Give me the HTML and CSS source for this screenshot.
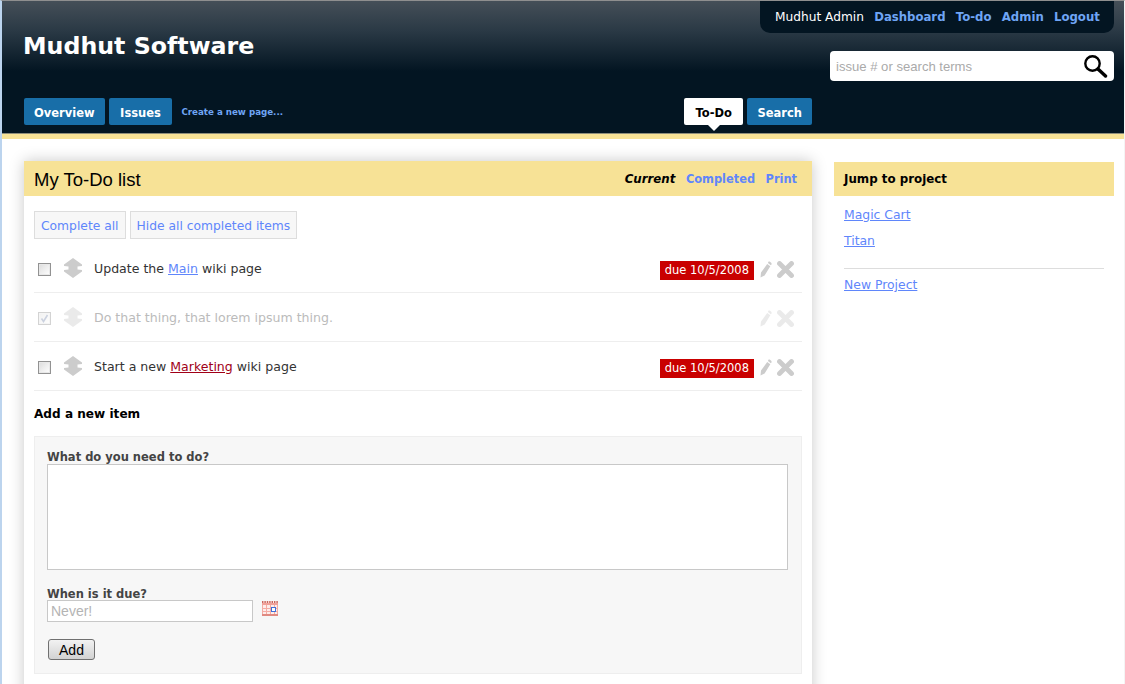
FILE: index.html
```html
<!DOCTYPE html>
<html lang="en">
<head>
<meta charset="utf-8">
<title>Mudhut Software</title>
<link rel="stylesheet" href="styles.css">
</head>
<body>
<div class="frame">
  <header class="header">
    <div class="head-top">
      <h1 class="brand">Mudhut Software</h1>
      <div class="head-right">
        <nav class="account">
          <span class="user">Mudhut Admin</span>
          <a href="#">Dashboard</a>
          <a href="#">To-do</a>
          <a href="#">Admin</a>
          <a href="#">Logout</a>
        </nav>
        <div class="search">
          <span class="search-text">issue # or search terms</span>
          <svg class="search-icon" width="26" height="24" viewBox="0 0 26 24"><circle cx="9.5" cy="9.5" r="7.2" fill="none" stroke="#000" stroke-width="2.4"/><path d="M15 15 L22.5 22" stroke="#000" stroke-width="3.4" stroke-linecap="round"/></svg>
        </div>
      </div>
    </div>
    <div class="tabs">
      <div class="tabs-left">
        <a class="tab" href="#">Overview</a>
        <a class="tab tab-wide" href="#">Issues</a>
        <a class="new-page" href="#">Create a new page...</a>
      </div>
      <div class="tabs-right">
        <a class="tab tab-wide tab-active" href="#">To-Do</a>
        <a class="tab" href="#">Search</a>
      </div>
    </div>
  </header>
  <div class="stripe"></div>
  <div class="content">
    <main class="panel">
      <div class="panel-head">
        <h2 class="panel-title">My To-Do list</h2>
        <div class="filters">
          <em>Current</em>
          <a href="#">Completed</a>
          <a href="#">Print</a>
        </div>
      </div>
      <div class="panel-body">
        <div class="actions">
          <a class="action" href="#">Complete all</a>
          <a class="action" href="#">Hide all completed items</a>
        </div>
        <ul class="items">
          <li class="item">
            <span class="check"></span>
            <svg class="mover" width="18" height="20" viewBox="0 0 18 20"><path d="M9 0 L18 6.5 V8 L13.5 8.5 V11.5 L18 12 V13.5 L9 20 L0 13.5 V12 L4.5 11.5 V8.5 L0 8 V6.5 Z" fill="#ccc"/></svg>
            <span class="item-text">Update the <a href="#">Main</a> wiki page</span>
            <span class="due">due 10/5/2008</span>
            <svg class="pencil" width="12" height="17" viewBox="0 0 12 17"><path d="M8.6 0.5 L9.6 0.5 L11.5 2 L11.5 3.4 L10.9 4.2 L7.9 2 Z M7.2 3 L10.3 5.3 L4.6 14.4 L0.5 16.5 L1 11.6 Z" fill="#ccc"/></svg>
            <svg class="cross" width="17" height="17" viewBox="0 0 17 17"><path d="M2.5 2.5 L14.5 14.5 M14.5 2.5 L2.5 14.5" stroke="#ccc" stroke-width="4.8" stroke-linecap="round"/></svg>
          </li>
          <li class="item item-done">
            <span class="check"><svg width="11" height="11" viewBox="0 0 11 11"><path d="M2.5 5.5 L4.5 8.5 L8.5 2" fill="none" stroke="#7f8fb0" stroke-width="1.6"/></svg></span>
            <svg class="mover" width="18" height="20" viewBox="0 0 18 20"><path d="M9 0 L18 6.5 V8 L13.5 8.5 V11.5 L18 12 V13.5 L9 20 L0 13.5 V12 L4.5 11.5 V8.5 L0 8 V6.5 Z" fill="#ccc"/></svg>
            <span class="item-text">Do that thing, that lorem ipsum thing.</span>
            <svg class="pencil" width="12" height="17" viewBox="0 0 12 17"><path d="M8.6 0.5 L9.6 0.5 L11.5 2 L11.5 3.4 L10.9 4.2 L7.9 2 Z M7.2 3 L10.3 5.3 L4.6 14.4 L0.5 16.5 L1 11.6 Z" fill="#ccc"/></svg>
            <svg class="cross" width="17" height="17" viewBox="0 0 17 17"><path d="M2.5 2.5 L14.5 14.5 M14.5 2.5 L2.5 14.5" stroke="#ccc" stroke-width="4.8" stroke-linecap="round"/></svg>
          </li>
          <li class="item">
            <span class="check"></span>
            <svg class="mover" width="18" height="20" viewBox="0 0 18 20"><path d="M9 0 L18 6.5 V8 L13.5 8.5 V11.5 L18 12 V13.5 L9 20 L0 13.5 V12 L4.5 11.5 V8.5 L0 8 V6.5 Z" fill="#ccc"/></svg>
            <span class="item-text">Start a new <a class="missing" href="#">Marketing</a> wiki page</span>
            <span class="due">due 10/5/2008</span>
            <svg class="pencil" width="12" height="17" viewBox="0 0 12 17"><path d="M8.6 0.5 L9.6 0.5 L11.5 2 L11.5 3.4 L10.9 4.2 L7.9 2 Z M7.2 3 L10.3 5.3 L4.6 14.4 L0.5 16.5 L1 11.6 Z" fill="#ccc"/></svg>
            <svg class="cross" width="17" height="17" viewBox="0 0 17 17"><path d="M2.5 2.5 L14.5 14.5 M14.5 2.5 L2.5 14.5" stroke="#ccc" stroke-width="4.8" stroke-linecap="round"/></svg>
          </li>
        </ul>
        <h3 class="add-title">Add a new item</h3>
        <form class="add-form">
          <label class="field-label">What do you need to do?</label>
          <div class="textarea"></div>
          <label class="field-label field-label-due">When is it due?</label>
          <div class="due-row">
            <span class="date-input">Never!</span>
            <svg class="calendar" width="16" height="15" viewBox="0 0 16 15"><rect x="0" y="0" width="16" height="15" fill="#fdecea"/><path d="M0 1H16" stroke="#c9655c" stroke-width="2" stroke-dasharray="1.4 1"/><rect x="0" y="2" width="16" height="2" fill="#f0a199"/><path d="M0.5 4V15M4.5 4V15M8.5 4V15M12.5 4V15M15.5 4V15M0 7.5H16M0 10.5H16" stroke="#f4aba3"/><rect x="0" y="13" width="16" height="2" fill="#e08a81"/><rect x="9.5" y="6.5" width="4" height="4" fill="#fff" stroke="#3f6fd8"/></svg>
          </div>
          <button class="add-btn" type="button">Add</button>
        </form>
      </div>
    </main>
    <aside class="side">
      <h3 class="side-head">Jump to project</h3>
      <ul class="side-list">
        <li><a href="#">Magic Cart</a></li>
        <li><a href="#">Titan</a></li>
      </ul>
      <a class="side-new" href="#">New Project</a>
    </aside>
  </div>
</div>
</body>
</html>
```
FILE: styles.css
```css
* { box-sizing: border-box; }
html, body { margin: 0; padding: 0; height: 100%; overflow: hidden; }
body { background: #fff; font-family: "DejaVu Sans", Verdana, sans-serif; font-size: 12.5px; color: #333; }
a { color: #5f86fb; }
.frame { height: 684px; border-left: 2px solid #bcd4ee; border-top: 1px solid #8f8f8f; border-right: 1px solid #f4f4f4; overflow: hidden; }
.header { height: 132px; background: linear-gradient(to bottom, #454f58 0, #2a3945 30px, #031522 70px, #031522 100%); padding-left: 22px; padding-right: 10px; display: flex; flex-direction: column; }
.head-top { display: flex; justify-content: space-between; height: 97px; }
.brand { margin: 27px 0 0 -1px; font-size: 23.7px; line-height: 37px; font-weight: bold; color: #fff; }
.head-right { width: 354px; display: flex; flex-direction: column; align-items: flex-end; }
.account { width: 354px; height: 32px; background: #031522; border-radius: 0 0 10px 10px; padding-left: 15px; display: flex; gap: 10.3px; align-items: center; font-size: 11.7px; font-weight: bold; white-space: nowrap; }
.account a { color: #6fa5f5; text-decoration: none; }
.account .user { color: #fff; font-weight: normal; font-size: 12.2px; }
.search { width: 284px; height: 30px; margin-top: 18px; background: #fff; border-radius: 4px; display: flex; align-items: center; justify-content: space-between; padding: 0 5px 0 6px; }
.search-text { font-family: "Liberation Sans", Arial, sans-serif; font-size: 13.1px; color: #aaa; }
.tabs { display: flex; height: 27px; }
.tabs-left { width: 660px; display: flex; gap: 4px; align-items: center; }
.tabs-right { display: flex; gap: 4px; }
.tab { position: relative; display: block; height: 27px; line-height: 30px; padding: 0 10px; background: #186ea8; border-radius: 2px; color: #fff; font-size: 11.5px; font-weight: bold; text-decoration: none; }
.tab-wide { padding: 0 11.5px; }
.tab-active { background: #fff; color: #000; }
.tab-active::after { content: ""; position: absolute; left: 50%; bottom: -6px; margin-left: -6px; border: 6px solid transparent; border-bottom: 0; border-top-color: #fff; }
.new-page { margin-left: 5px; font-size: 8.7px; font-weight: bold; color: #6fa5f5; text-decoration: none; }
.stripe { height: 6px; background: #f7e296; border-top: 1px solid #8e8e7c; }
.content { display: flex; align-items: flex-start; padding: 22px 10px 0 22px; gap: 22px; }
.panel { width: 788px; background: #fff; box-shadow: 0 0 14px rgba(0,0,0,0.22); flex: none; }
.panel-head { height: 35px; background: #f7e296; display: flex; align-items: center; justify-content: space-between; padding: 0 15px 0 10px; }
.panel-title { margin: 2px 0 0; font-family: "Liberation Sans", Arial, sans-serif; font-size: 18.5px; font-weight: normal; color: #000; }
.filters { display: flex; gap: 10.5px; font-size: 11.4px; font-weight: bold; margin-top: 1px; }
.filters em { color: #000; font-size: 11.8px; }
.filters a { text-decoration: none; color: #5f86fb; }
.panel-body { padding: 15px 10px 30px; }
.actions { display: flex; gap: 4px; }
.action { display: block; height: 28px; line-height: 28px; padding: 0 6px; background: #f7f7f7; border: 1px solid #ddd; text-decoration: none; font-size: 12.3px; white-space: nowrap; }
.items { list-style: none; margin: 5px 0 0; padding: 0; }
.item { height: 49px; border-bottom: 1px solid #eee; display: flex; align-items: center; padding-left: 4px; }
.check { width: 13px; height: 13px; border: 1px solid #929292; background: linear-gradient(135deg, #dcdcdc, #fff); display: flex; align-items: center; justify-content: center; flex: none; box-shadow: inset 0 0 0 1px #e8e8e8; margin-top: 3px; }
.mover { margin-left: 13px; flex: none; }
.item-text { margin-left: 12px; flex: 1; font-size: 12.55px; color: #333; }
.missing { color: #a00018; }
.due { background: #c90000; color: #fff; font-size: 11.5px; line-height: 19px; height: 19px; padding: 0 5px; margin: 4px 6px 0 0; white-space: nowrap; }
.pencil { flex: none; margin: 2px 5px 0 0; }
.cross { flex: none; margin: 2px 8px 0 0; }
.item-done .check, .item-done .mover, .item-done .pencil, .item-done .cross { opacity: 0.4; }
.item-done .item-text { color: #bbb; }
.add-title { margin: 15px 0 14px; font-size: 12.1px; line-height: 16px; font-weight: bold; color: #000; }
.add-form { background: #f7f7f7; border: 1px solid #eee; padding: 13px 12px; height: 238px; }
.field-label { display: block; font-size: 11.5px; font-weight: bold; line-height: 14px; color: #444; }
.textarea { height: 106px; width: 741px; background: #fff; border: 1px solid #c8c8c8; }
.field-label-due { margin-top: 18px; line-height: 12px; }
.due-row { display: flex; align-items: flex-start; gap: 9px; }
.calendar { flex: none; margin-top: 1px; }
.date-input { display: block; width: 206px; height: 22px; line-height: 20px; background: #fff; border: 1px solid #c8c8c8; padding-left: 3px; font-family: "Liberation Sans", Arial, sans-serif; font-size: 14px; color: #b4b4b4; }
.add-btn { display: block; width: 47px; height: 21px; margin: 17px 0 0 1px; padding: 0; border: 1px solid #707070; border-radius: 3px; background: linear-gradient(#f2f2f2, #d2d2d2); font-family: "Liberation Sans", Arial, sans-serif; font-size: 14px; color: #000; }
.side { width: 280px; flex: none; margin-top: 1px; font-size: 12.4px; }
.side-head { margin: 0; height: 34px; background: #f7e296; padding-left: 10px; font-size: 11.85px; line-height: 34px; font-weight: bold; color: #000; }
.side-list { list-style: none; margin: 0 10px; padding: 6px 0 14px; border-bottom: 1px solid #ddd; }
.side-list li { height: 26px; line-height: 26px; }
.side-new { display: block; margin: 7px 10px 0; line-height: 18px; }
```
